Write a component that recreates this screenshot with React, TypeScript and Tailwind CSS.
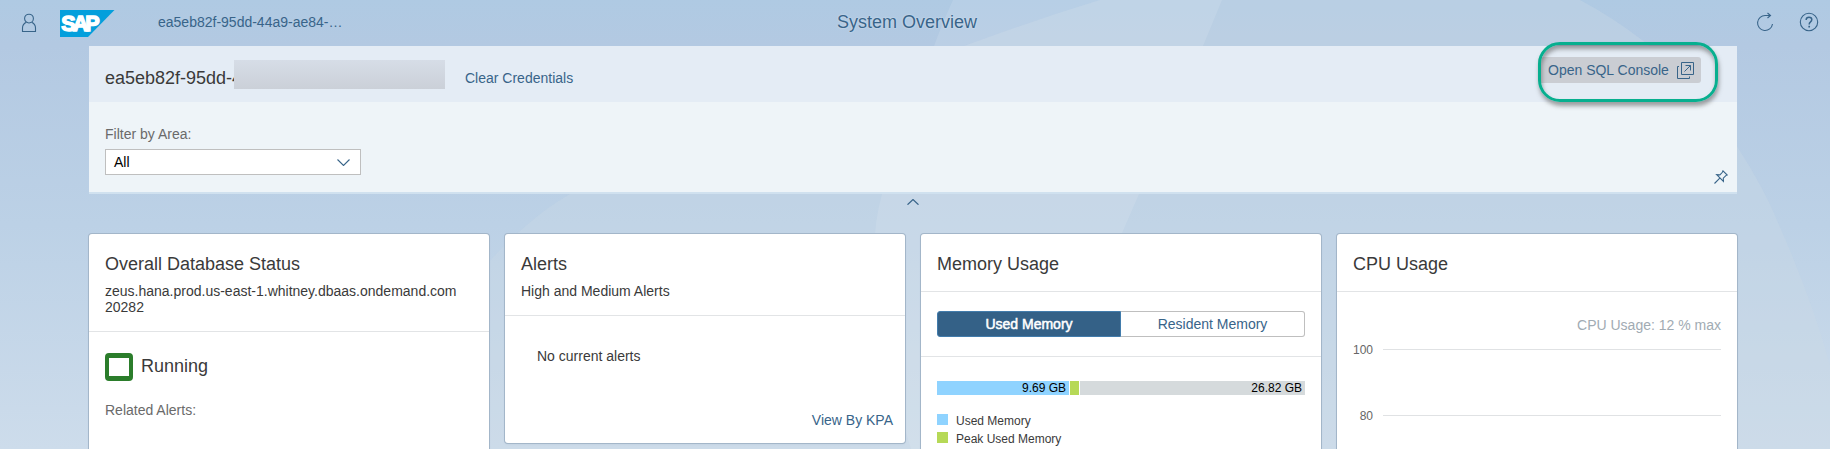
import React from "react";

const ink = "text-[#386489]";

function Backdrop() {
  return (
    <svg className="absolute inset-0 -z-10 h-full w-full" viewBox="0 0 1830 449" preserveAspectRatio="none" aria-hidden="true">
      <defs>
        <linearGradient id="sky" x1="0" y1="0" x2="0" y2="1">
          <stop offset="0" stopColor="#afcae3" />
          <stop offset="0.1" stopColor="#b3c9e2" />
          <stop offset="0.5" stopColor="#bcd1e6" />
          <stop offset="1" stopColor="#cddceb" />
        </linearGradient>
      </defs>
      <rect width="1830" height="449" fill="url(#sky)" />
      <path d="M1100 0Q1048 16 1000 33L964 46Q700 110 570 194Q545 209 527 225Q508 241 490 261Q430 340 400 449H1830V365Q1812 300 1779 225Q1764 188 1738 148Q1700 85 1642 40Q1612 17 1580 0Z" fill="#cbdbe6" fillOpacity="0.35" />
      <path d="M953 0Q942 23 934 46Q898 125 882 194Q872 230 875 270Q880 350 911 449H1070Q1090 320 1122 233L1139 194L1203 46L1222 0Z" fill="#ffffff" fillOpacity="0.11" />
    </svg>
  );
}

function PersonIcon() {
  return (
    <svg className="h-5 w-4" viewBox="0 0 16 20" fill="none" stroke="currentColor" strokeWidth="1.1" aria-hidden="true">
      <circle cx="8" cy="5.6" r="4.400" />
      <path d="M5.400 9.200C2.800 10.400 1.500 12.300 1.500 15v3.500h13V15c0-2.700-1.300-4.600-3.900-5.800" />
    </svg>
  );
}

function SapLogo() {
  return (
    <svg className="h-[27px] w-[55px]" viewBox="0 0 55 27" role="img" aria-label="SAP">
      <path d="M0 0h54.500L28 27H0z" fill="#049fdc" />
      <text x="1.200" y="21.300" fill="#fff" stroke="#fff" strokeWidth="1.500" fontFamily="Liberation Sans, sans-serif" fontWeight="700" fontSize="21.500" textLength="38.500" lengthAdjust="spacing">
        SAP
      </text>
    </svg>
  );
}

function RefreshIcon() {
  return (
    <svg className="h-5 w-[18px]" viewBox="0 0 18 20" fill="none" stroke="currentColor" strokeWidth="1.100" aria-hidden="true">
      <path d="M14.500 3.500H9.500A7.500 7.500 0 1 0 16.500 12" />
      <path d="M11.500 1l3 2.500-3 2.500" />
    </svg>
  );
}

function HelpIcon() {
  return (
    <svg className="size-5" viewBox="0 0 20 20" fill="none" stroke="currentColor" strokeWidth="1.100" aria-hidden="true">
      <circle cx="10" cy="10" r="8.700" />
      <path d="M7.200 8V7.500Q7.400 5.300 10 5.300Q12.800 5.300 12.800 7.600Q12.800 9 11.300 10.200Q10.200 11 10.200 12.600" strokeWidth="1.500" />
      <path d="M10.200 13.800v1.700" strokeWidth="1.700" />
    </svg>
  );
}

function PopoutIcon() {
  return (
    <svg className="size-[17px]" viewBox="0 0 17 17" fill="none" stroke="currentColor" aria-hidden="true">
      <path d="M4.500 .5h12v12h-12zM2 4.500H.5v12h12V14.500M7.500 9.500l6-6M8.500 3.500h5v5" />
    </svg>
  );
}

function PinIcon() {
  return (
    <svg className="size-[14px]" viewBox="0 0 14 14" fill="none" stroke="currentColor" strokeWidth="1.100" aria-hidden="true">
      <path d="M9 .8l4.200 4.200-1.400.6-2.500 2.600.1 3.100-6.700-6.600 3.200.2 2.500-2.600zM5.800 8.200L.5 13.500" />
    </svg>
  );
}

type CardProps = { title: string; subtitle?: React.ReactNode; className?: string; children: React.ReactNode };

function Card({ title, subtitle, className = "", children }: CardProps) {
  return (
    <section className={`w-[400px] rounded-[3px] bg-white shadow-[0_0_0_1px_#a3b6c9,0_1px_2px_#8da3b855] ${className}`}>
      <header className="border-b border-[#e2e4e6] px-4 pt-[19px]">
        <h2 className="text-[18px] leading-[22px] text-[#3a3a3a]">{title}</h2>
        {subtitle ? <p className="pt-2 pb-[16px] text-[14px] leading-4 text-[#3a3a3a]">{subtitle}</p> : <div className="h-4" />}
      </header>
      {children}
    </section>
  );
}

function Legend({ swatch, label }: { swatch: string; label: string }) {
  return (
    <div className="flex h-[18px] items-center gap-2">
      <span className={`size-[11px] ${swatch}`} />
      <span className="pt-[3px] text-[12px] leading-4 text-[#3a3a3a]">{label}</span>
    </div>
  );
}

function GridLine({ value }: { value: number }) {
  return (
    <div className="flex h-[66px] items-start">
      <span className="w-5 text-right text-[12px] leading-4 text-[#666]">{value}</span>
      <span className="mt-[7px] ml-[10px] h-px flex-1 bg-[#e0e2e4]" />
    </div>
  );
}

export default function App() {
  return (
    <div className="relative isolate h-[449px] w-[1830px] overflow-hidden font-['Liberation_Sans',Arial,sans-serif]">
      <Backdrop />

      <header className={`grid h-[46px] grid-cols-3 items-center ${ink}`}>
        <div className="flex items-center pl-[21px]">
          <PersonIcon />
          <div className="pl-[23px]"><SapLogo /></div>
          <span className="pb-[2px] pl-[43px] text-[14px]">ea5eb82f-95dd-44a9-ae84-…</span>
        </div>
        <h1 className="-ml-4 pb-[2px] text-center text-[18px] [text-shadow:0_0_2px_#ffffff99]">System Overview</h1>
        <div className="flex items-center justify-end gap-[25px] pr-[11px] pb-[2px]">
          <RefreshIcon />
          <HelpIcon />
        </div>
      </header>

      <section className="ml-[89px] w-[1648px] border-b-2 border-[#d0e1ef] bg-[#eef4f8]">
        <div className="relative flex h-14 justify-between bg-[#e4ecf5] pl-4">
          <div className="flex items-center pt-2">
            <div className="flex w-[340px] items-center">
              <span className="w-[129px] text-[18px] leading-6 whitespace-nowrap text-[#3a3a3a]">ea5eb82f-95dd-4</span>
              <span className="relative -mt-[7px] h-[29px] w-[211px] bg-linear-to-b from-[#d6dde7] to-[#cbd0d8]" />
            </div>
            <a className={`ml-5 text-[14px] ${ink}`}>Clear Credentials</a>
          </div>
          <button className={`mt-[11px] mr-9 flex h-[26px] w-[163px] items-center justify-between rounded-[3px] bg-[#cacdd3] pr-[7px] pl-[10px] text-[14px] ${ink}`}>
            Open SQL Console
            <PopoutIcon />
          </button>
          <div className="absolute -top-1 right-[19px] h-[60px] w-[180px] rounded-[22px] border-3 border-[#07af8f] shadow-[1px_4px_4px_#55555588,inset_1px_4px_4px_#55555588]" />
        </div>
        <div className="flex h-[90px] items-end justify-between pr-[9px] pb-[7px] pl-4">
          <div className="pb-[10px]">
            <div className="text-[14px] leading-4 text-[#6a6a6a]">Filter by Area:</div>
            <div className="mt-[7px] flex h-[26px] w-[256px] items-center justify-between border border-[#bfbfbf] bg-white pr-[10px] pl-2 text-[14px] text-black">
              All
              <svg className={`h-[7px] w-[13px] ${ink}`} viewBox="0 0 13 7" fill="none" stroke="currentColor" strokeWidth="1.100"><path d="M.5.500l6 6 6-6" /></svg>
            </div>
          </div>
          <span className={`pb-px ${ink}`}><PinIcon /></span>
        </div>
      </section>

      <div className={`flex h-10 justify-center pt-[5px] pr-1 ${ink}`}>
        <svg className="h-[6px] w-[12px]" viewBox="0 0 12 6" fill="none" stroke="currentColor" strokeWidth="1.200"><path d="M.5 5.700l5.500-5.200 5.500 5.200" /></svg>
      </div>

      <main className="flex items-start gap-4 pl-[89px]">
        <Card className="h-[230px]" title="Overall Database Status" subtitle={<>zeus.hana.prod.us-east-1.whitney.dbaas.ondemand.com<br />20282</>}>
          <div className="px-4 pt-[21px]">
            <div className="flex items-center gap-2">
              <span className="size-7 rounded-[4px] border-x-4 border-y-5 border-[#2b7d2b]" />
              <span className="pb-[2px] text-[18px] leading-6 text-[#3a3a3a]">Running</span>
            </div>
            <p className="pt-[21px] text-[14px] leading-4 text-[#6a6a6a]">Related Alerts:</p>
          </div>
        </Card>

        <Card className="h-[209px]" title="Alerts" subtitle="High and Medium Alerts">
          <p className="px-8 pt-8 text-[14px] leading-4 text-[#3a3a3a]">No current alerts</p>
          <p className={`pt-12 pr-3 text-right text-[14px] leading-4 ${ink}`}>View By KPA</p>
        </Card>

        <Card className="h-[230px]" title="Memory Usage">
          <div className="border-b border-[#e2e4e6] px-4 py-[19px]">
            <div className="flex h-[26px] text-[14px]">
              <button className="w-1/2 rounded-l-[3px] border border-[#427cac] bg-[#346187] text-white [-webkit-text-stroke:0.5px_white]">Used Memory</button>
              <button className={`w-1/2 rounded-r-[3px] border border-l-0 border-[#bfbfbf] bg-white ${ink}`}>Resident Memory</button>
            </div>
          </div>
          <div className="px-4 pt-6">
            <div className="flex h-[14px] gap-px text-right text-[12px] leading-[14px] text-black">
              <span className="w-[132px] bg-[#8fd3ff] pr-[3px]">9.69 GB</span>
              <span className="w-[9px] bg-[#b6d957]" />
              <span className="flex-1 bg-[#d5dadc] pr-[3px]">26.82 GB</span>
            </div>
            <div className="pt-[15px]">
              <Legend swatch="bg-[#8fd3ff]" label="Used Memory" />
              <Legend swatch="bg-[#b6d957]" label="Peak Used Memory" />
            </div>
          </div>
        </Card>

        <Card className="h-[230px]" title="CPU Usage">
          <div className="px-4 pt-[25px]">
            <p className="text-right text-[14px] leading-4 text-[#a1abb3]">CPU Usage: 12 % max</p>
            <div className="pt-[9px]">
              <GridLine value={100} />
              <GridLine value={80} />
            </div>
          </div>
        </Card>
      </main>
    </div>
  );
}
